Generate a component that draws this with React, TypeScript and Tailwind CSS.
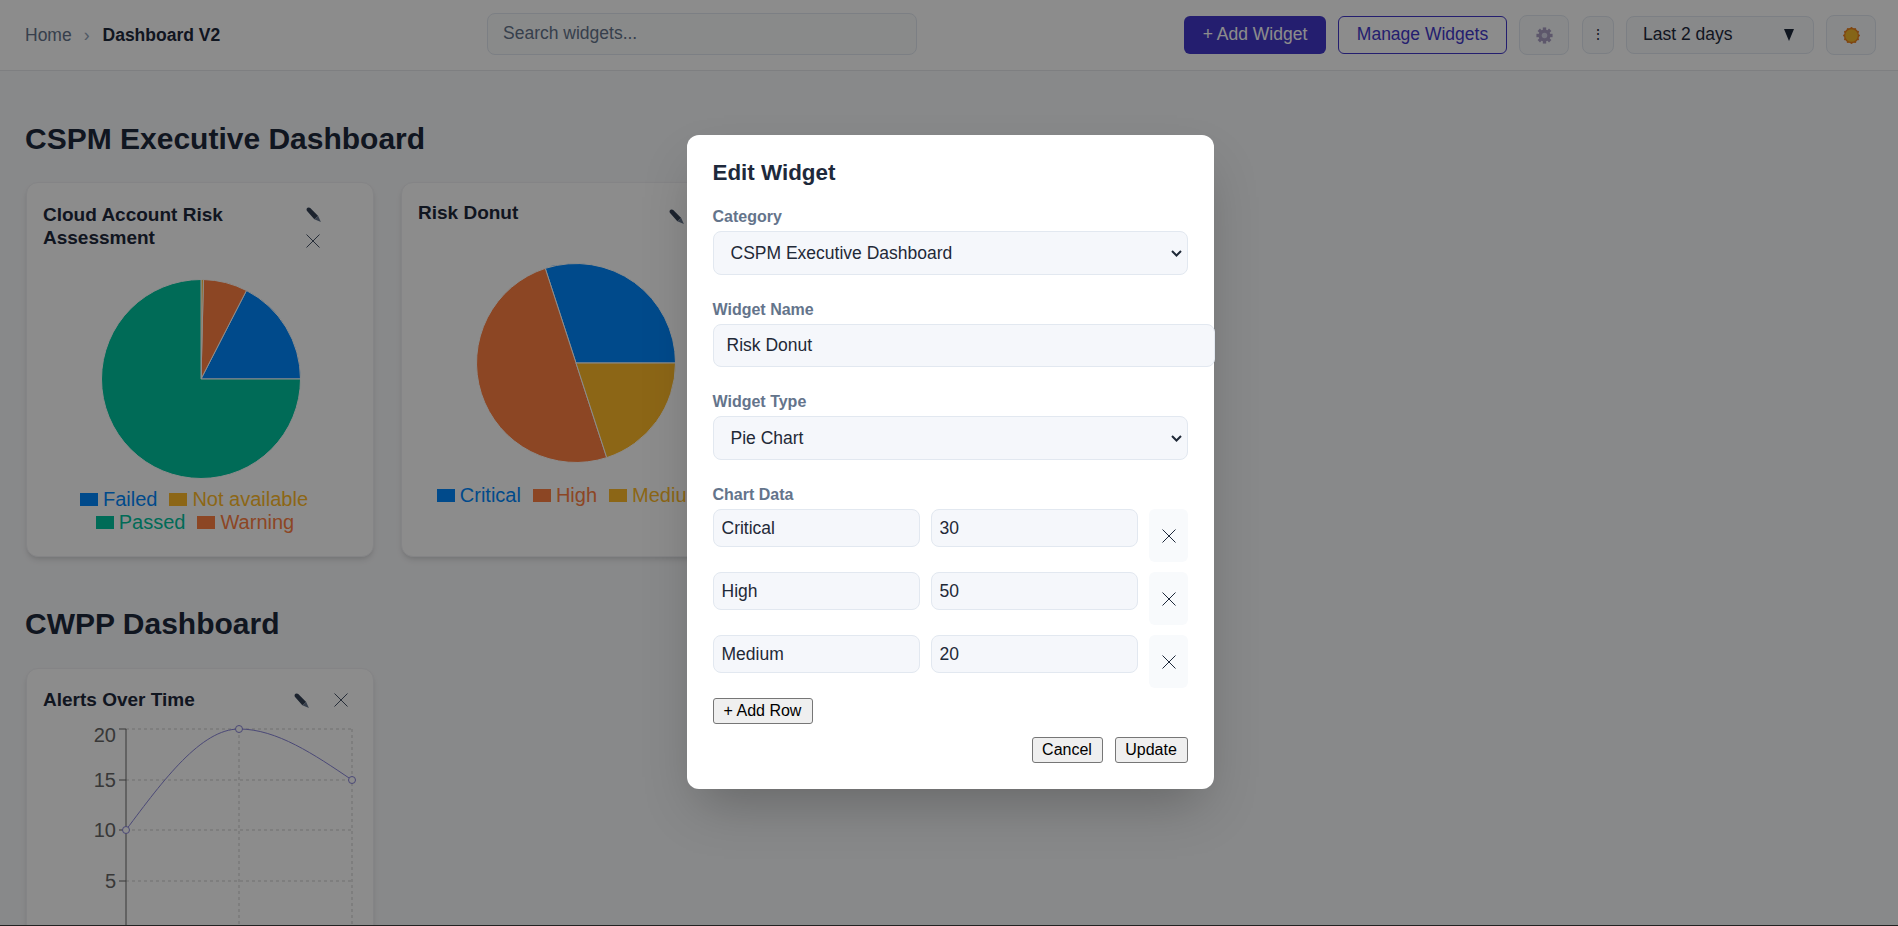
import React from "react";

const FONT = "font-['Liberation_Sans',Arial,sans-serif]";

// recharts default palette
const BLUE = "#0088FE";
const GREEN = "#00C49F";
const GOLD = "#FFBB28";
const ORANGE = "#FF8042";

interface Slice {
  color: string;
  from: number;
  to: number;
}

interface LegendItem {
  label: string;
  color: string;
}

const point = (deg: number, r: number) => {
  const rad = (deg * Math.PI) / 180;
  return [100 + r * Math.cos(rad), 100 - r * Math.sin(rad)];
};

const Pie: React.FC<{ slices: Slice[] }> = ({ slices }) => (
  <svg width="200" height="200" viewBox="0 0 200 200" className="block ml-[2px]">
    {slices.map((s) => {
      const [x1, y1] = point(s.from, 99.5);
      const [x2, y2] = point(s.to, 99.5);
      const large = s.to - s.from > 180 ? 1 : 0;
      return (
        <path
          key={s.color}
          d={`M100 100 L${x1} ${y1} A99.5 99.5 0 ${large} 0 ${x2} ${y2} Z`}
          fill={s.color}
          stroke="#fff"
          strokeWidth="1"
        />
      );
    })}
  </svg>
);

const Legend: React.FC<{ items: LegendItem[]; className?: string }> = ({ items, className }) => (
  <div className={`flex flex-wrap justify-center text-[20px] leading-[23px] ${className ?? ""}`}>
    {items.map((item) => (
      <span key={item.label} className="flex items-center mr-[12px] last:mr-[10px] whitespace-nowrap" style={{ color: item.color }}>
        <span className="w-[18px] h-[13px] mr-[5px]" style={{ backgroundColor: item.color }} />
        {item.label}
      </span>
    ))}
  </div>
);

const PencilIcon = () => (
  <svg width="16" height="16" viewBox="0 0 15 15" className="block">
    <path d="M0.8 3.6 Q0 1.8 1.4 0.8 Q2.9 -0.1 4 1 L11.4 8.4 L7.8 11.6 Z" fill="#334155" />
    <path d="M11.4 8.4 L14 14 L7.8 11.6 Z" fill="#64748b" />
  </svg>
);

const CloseIcon = () => (
  <svg width="14" height="14" viewBox="0 0 14 14" className="block" fill="none" stroke="currentColor" strokeWidth="1">
    <path d="M0.5 0.5 L13.5 13.5 M13.5 0.5 L0.5 13.5" />
  </svg>
);

const GearIcon = () => (
  <svg width="17" height="17" viewBox="0 0 16 16" className="block">
    <g fill="#a99fc4">
      <circle cx="8" cy="8" r="5.6" />
      {[0, 45, 90, 135, 180, 225, 270, 315].map((a) => (
        <rect key={a} x="6.4" y="0.4" width="3.2" height="3.4" transform={`rotate(${a} 8 8)`} />
      ))}
    </g>
    <circle cx="8" cy="8" r="2.6" fill="#d8d8ea" />
  </svg>
);

const SunIcon = () => (
  <svg width="17" height="17" viewBox="0 0 16 16" className="block">
    <g fill="#e8801f">
      <circle cx="8" cy="8" r="7.2" />
      {[0, 30, 60, 90, 120, 150, 180, 210, 240, 270, 300, 330].map((a) => (
        <circle key={a} cx="8" cy="1" r="1" transform={`rotate(${a} 8 8)`} />
      ))}
    </g>
    <circle cx="8" cy="8" r="5.9" fill="#f2b82a" />
  </svg>
);

const LineChart = () => (
  <svg width="348" height="260" viewBox="0 0 348 260" className="block">
    <g stroke="#ccc" strokeDasharray="3 3" fill="none">
      <path d="M99 13 H325 M99 64 H325 M99 114 H325 M99 165 H325" />
      <path d="M212 13 V260 M325 13 V260" />
    </g>
    <path d="M99 13 V260 M92 13 H99 M92 64 H99 M92 114 H99 M92 165 H99 M92 216 H99" stroke="#666" fill="none" />
    <g fill="#666" fontSize="20" textAnchor="end">
      <text x="89" y="26">20</text>
      <text x="89" y="71">15</text>
      <text x="89" y="121">10</text>
      <text x="89" y="172">5</text>
      <text x="89" y="223">0</text>
    </g>
    <path d="M99 114 C136.7 63.5 174.3 13 212 13 C249.7 13 287.3 38.5 325 64" stroke="#8884d8" fill="none" />
    <g fill="#fff" stroke="#8884d8">
      <circle cx="99" cy="114" r="3.5" />
      <circle cx="212" cy="13" r="3.5" />
      <circle cx="325" cy="64" r="3.5" />
    </g>
  </svg>
);

const SelectField: React.FC<{ label: string }> = ({ label }) => (
  <div className="relative">
    <select defaultValue={label} className={`${fieldClass} appearance-none block w-full h-[44px] rounded-[8px] px-[17px] text-[17.5px]`}>
      <option value={label}>{label}</option>
    </select>
    <svg width="11" height="7" viewBox="0 0 11 7" className="absolute right-[6px] top-[19px]" fill="none" stroke="#1f2937" strokeWidth="2">
      <path d="M1 1 L5.5 5.5 L10 1" />
    </svg>
  </div>
);

const cardClass = "w-[348px] h-[375px] shrink-0 bg-white rounded-[12px] border border-[#f0f1f4] shadow-md px-[16px] flex flex-col";
const fieldClass = "bg-[#f5f7fb] border border-[#e2e8f0] text-[#1f2937] outline-none";
const labelClass = "block font-bold text-[#64748b] text-[16px] leading-[20px]";
const nativeBtn = "bg-[#efefef] border border-[#767676] rounded-[3px] text-black text-[16px] leading-[18px] h-[26px]";
const sectionTitle = "text-[30px] leading-[36px] font-bold text-[#1e293b] -ml-[1px]";
const cardTitle = "text-[19px] leading-[23px] font-bold text-[#1e293b]";

const rows = [
  { name: "Critical", value: "30" },
  { name: "High", value: "50" },
  { name: "Medium", value: "20" },
];

const EditModal = () => (
  <div className="absolute inset-0 bg-black/45 flex items-start justify-center">
    <div className="mt-[135px] ml-[2px] w-[527px] h-[654px] bg-white rounded-[12px] shadow-2xl px-[26px] pt-[24px]">
      <h2 className="text-[22.4px] leading-[28px] font-bold text-[#1e293b]">Edit Widget</h2>
      <label className={`${labelClass} mt-[20px] mb-[4px]`}>Category</label>
      <SelectField label="CSPM Executive Dashboard" />

      <label className={`${labelClass} mt-[25px] mb-[4px]`}>Widget Name</label>
      <input readOnly value="Risk Donut" className={`${fieldClass} block w-[502px] h-[43px] rounded-[8px] px-[13px] text-[17.5px]`} />

      <label className={`${labelClass} mt-[25px] mb-[4px]`}>Widget Type</label>
      <SelectField label="Pie Chart" />

      <label className={`${labelClass} mt-[25px] mb-[4px]`}>Chart Data</label>
      <div className="flex flex-col gap-[10px]">
        {rows.map((r) => (
          <div key={r.name} className="flex gap-[11px] items-start">
            <input readOnly value={r.name} className={`${fieldClass} w-[207px] h-[38px] rounded-[8px] px-[8px] text-[17.5px]`} />
            <input readOnly value={r.value} className={`${fieldClass} w-[207px] h-[38px] rounded-[8px] px-[8px] text-[17.5px]`} />
            <button className="w-[39px] h-[53px] bg-[#f8fafc] rounded-[6px] text-[#1e293b] flex items-center justify-center pt-[1px] pl-[1px]">
              <CloseIcon />
            </button>
          </div>
        ))}
      </div>
      <button className={`${nativeBtn} mt-[10px] w-[100px] block`}>+ Add Row</button>
      <div className="flex justify-end gap-[12px] mt-[13px]">
        <button className={`${nativeBtn} w-[71px]`}>Cancel</button>
        <button className={`${nativeBtn} w-[73px]`}>Update</button>
      </div>
    </div>
  </div>
);

export default function App() {
  return (
    <div className={`relative h-[926px] overflow-hidden bg-[#f8f9fb] text-[#1e293b] ${FONT}`}>
      <header className="h-[71px] bg-white border-b border-[#e5e7eb] flex items-center pl-[25px] pr-[22px] text-[17.5px]">
        <div className="flex items-center w-[462px]">
          <span className="text-[#64748b]">Home</span>
          <span className="text-[#94a3b8] ml-[12px] mr-[13px]">›</span>
          <span className="font-bold text-[#1e293b]">Dashboard V2</span>
        </div>
        <input
          readOnly
          placeholder="Search widgets..."
          className="w-[430px] h-[42px] mb-[2px] pb-[1px] rounded-[8px] border border-[#e2e8f0] px-[15px] bg-[#fafbfc] outline-none placeholder:text-[#64748b]"
        />
        <div className="ml-auto flex items-center gap-[12px]">
          <button className="h-[38px] w-[142px] pb-[1px] rounded-[6px] bg-[#4338ca] text-white">+ Add Widget</button>
          <button className="h-[38px] w-[169px] pb-[1px] rounded-[6px] border border-[#4338ca] text-[#4338ca] bg-white">Manage Widgets</button>
          <button className="h-[40px] w-[50px] rounded-[8px] border border-[#e2e8f0] bg-[#f8f9fc] flex items-center justify-center">
            <GearIcon />
          </button>
          <button className="h-[38px] w-[32px] ml-[1px] pb-[1px] rounded-[8px] border border-[#e2e8f0] bg-[#f8f9fc] flex items-center justify-center text-[14px]">⋮</button>
          <div className="h-[38px] w-[188px] pb-[1px] rounded-[8px] border border-[#e2e8f0] bg-[#f8f9fc] flex items-center justify-between pl-[16px] pr-[19px]">
            <span>Last 2 days</span>
            <span className="w-0 h-0 border-x-[5px] border-x-transparent border-t-[12px] border-t-[#1e293b]" />
          </div>
          <button className="h-[40px] w-[50px] rounded-[8px] border border-[#e2e8f0] bg-[#f8f9fc] flex items-center justify-center">
            <SunIcon />
          </button>
        </div>
      </header>

      <main className="px-[26px]">
        <h1 className={`${sectionTitle} mt-[50px] mb-[25px]`}>CSPM Executive Dashboard</h1>
        <div className="flex gap-[27px]">
          <section className={cardClass}>
            <div className="flex justify-between pt-[20px] h-[96px]">
              <h3 className={`${cardTitle} w-[210px]`}>Cloud Account Risk Assessment</h3>
              <div className="w-[60px] flex flex-col items-center pt-[4px] gap-[11px] text-[#475569] mr-[13px]">
                <PencilIcon />
                <span className="mr-[2px]">
                  <CloseIcon />
                </span>
              </div>
            </div>
            <div className="flex justify-center">
              <Pie
                slices={[
                  { color: BLUE, from: 0, to: 62.8 },
                  { color: ORANGE, from: 62.8, to: 88.6 },
                  { color: GOLD, from: 88.6, to: 90 },
                  { color: GREEN, from: 90, to: 360 },
                ]}
              />
            </div>
            <Legend
              className="-mx-[10px] mt-[9px]"
              items={[
                { label: "Failed", color: BLUE },
                { label: "Not available", color: GOLD },
                { label: "Passed", color: GREEN },
                { label: "Warning", color: ORANGE },
              ]}
            />
          </section>

          <section className={cardClass}>
            <div className="flex justify-between pt-[18px] h-[80px]">
              <h3 className={cardTitle}>Risk Donut</h3>
              <div className="flex gap-[24px] pt-[8px] text-[#475569] pr-[9px]">
                <PencilIcon />
                <CloseIcon />
              </div>
            </div>
            <div className="flex justify-center">
              <Pie
                slices={[
                  { color: BLUE, from: 0, to: 108 },
                  { color: ORANGE, from: 108, to: 288 },
                  { color: GOLD, from: 288, to: 360 },
                ]}
              />
            </div>
            <Legend
              className="mt-[21px]"
              items={[
                { label: "Critical", color: BLUE },
                { label: "High", color: ORANGE },
                { label: "Medium", color: GOLD },
              ]}
            />
          </section>
        </div>

        <h1 className={`${sectionTitle} mt-[49px] mb-[26px]`}>CWPP Dashboard</h1>
        <section className={`${cardClass} !h-[400px] !px-0`}>
          <div className="flex justify-between pt-[19px] h-[47px] px-[16px]">
            <h3 className={cardTitle}>Alerts Over Time</h3>
            <div className="flex gap-[24px] pt-[5px] text-[#475569] pr-[9px]">
              <PencilIcon />
              <CloseIcon />
            </div>
          </div>
          <LineChart />
        </section>
      </main>

      <EditModal />
      <div className="absolute left-0 right-0 bottom-0 h-px bg-[#222]" />
    </div>
  );
}
